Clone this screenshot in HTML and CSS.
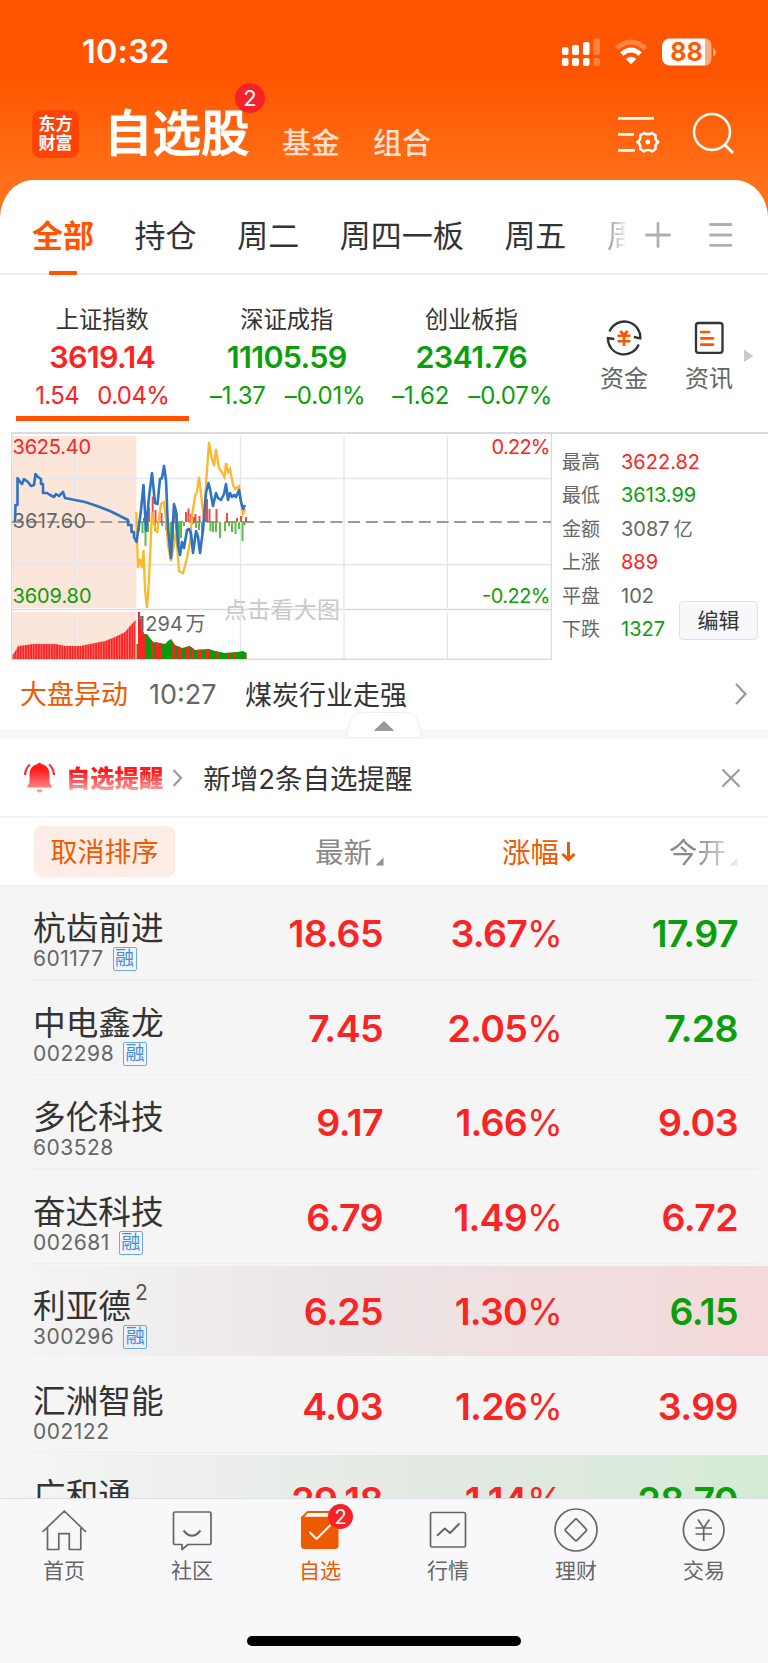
FILE: index.html
```html
<!DOCTYPE html>
<html lang="zh-CN">
<head>
<meta charset="utf-8">
<title>自选股</title>
<link rel="stylesheet" href="styles.css">
</head>
<body>
<div class="phone">
  <header class="top">
    <div class="status">
      <span class="clock">10:32</span>
      <svg class="status-icons" width="158" height="32" viewBox="560 35 158 32">
        <g fill="#fff">
          <rect x="562" y="46" width="6.500" height="8" rx="2"/><rect x="572" y="44" width="7" height="10" rx="2"/><rect x="583" y="41" width="6.500" height="13" rx="2"/>
          <rect x="562" y="57" width="6.500" height="8" rx="2"/><rect x="572" y="57" width="7" height="8" rx="2"/><rect x="583" y="57" width="6.500" height="8" rx="2"/>
          <g opacity=".25"><rect x="593.500" y="37.500" width="6.500" height="16.500" rx="2"/><rect x="593.500" y="57" width="6.500" height="8" rx="2"/></g>
        </g>
        <path d="M616.500 47.500Q631 34.500 645.500 47.500" fill="none" stroke="#fff" stroke-opacity=".27" stroke-width="5"/>
        <path d="M621.800 53Q631 44.800 640.200 53" fill="none" stroke="#fff" stroke-width="4.800"/>
        <path d="M625.800 58Q631 53.500 636.200 58L631 63.200Z" fill="#fff"/>
        <path d="M670 37.500H705.500V64.500H670A8 8 0 0 1 662 56.500V45.500A8 8 0 0 1 670 37.500Z" fill="#fff"/>
        <path d="M705.500 37.500A6 7 0 0 1 711.500 45V57A6 7 0 0 1 705.500 64.500Z" fill="#ffab80"/>
        <path d="M713 47Q716 48 716 51T713 55.500Z" fill="#ffab80"/>
        <text class="battery" x="686.500" y="60" text-anchor="middle" textLength="32.500">88</text>
      </svg>
    </div>
    <div class="title-row">
      <div class="logo"><span>东方</span><span>财富</span></div>
      <h1 class="title">自选股<b class="badge">2</b></h1>
      <span class="sub">基金</span>
      <span class="sub">组合</span>
      <svg class="title-icons" width="120" height="46" viewBox="616 110 120 46" fill="none" stroke="#fff">
        <path d="M618 118.300H654M618 134.300H634M618 150.300H635" stroke-width="2.800"/>
        <path d="M644 133C645.500 134.500 650.500 134.500 652 133L655.500 135.300C655 138.500 656 140.800 658.300 142C656 143.300 655 145.500 655.500 149L652 151.300C650 149.500 646 149.500 644 151.300L640.300 149C640.800 145.500 639.800 143.300 637.500 142C639.800 140.800 640.800 138.500 640.300 135.300Z" stroke-width="2.600" stroke-linejoin="round"/>
        <circle cx="647.800" cy="142" r="2.400" fill="#fff" stroke="none"/>
        <circle cx="712" cy="132" r="18" stroke-width="2.500"/><path d="M724.500 144.500L733 153" stroke-width="2.800"/>
      </svg>
    </div>
  </header>

  <main class="card">
    <nav class="groups">
      <span class="group on">全部</span>
      <span class="group">持仓</span>
      <span class="group">周二</span>
      <span class="group">周四一板</span>
      <span class="group">周五</span>
      <span class="group cut">周</span>
      <svg class="group-tools" width="92" height="28" viewBox="644 221 92 28" fill="none" stroke="#b0b0b0" stroke-width="2.800" stroke-linecap="round">
        <path d="M646.500 235H669.500M658 223.500V246.500M710.500 224.500H731M710.500 235H731M710.500 245.300H731"/>
      </svg>
    </nav>

    <section class="indices">
      <div class="index up on"><span class="index-name">上证指数</span><b>3619.14</b><p><span>1.54</span><span>0.04%</span></p></div>
      <div class="index down"><span class="index-name">深证成指</span><b>11105.59</b><p><span>–1.37</span><span>–0.01%</span></p></div>
      <div class="index down"><span class="index-name">创业板指</span><b>2341.76</b><p><span>–1.62</span><span>–0.07%</span></p></div>
      <div class="link">
        <svg width="36" height="36" viewBox="607 320 36 36" fill="none" stroke="#333" stroke-width="2.300">
          <path d="M610.500 331.500A16 16 0 0 1 641.300 338.300L634.800 337M639.700 344.500A16 16 0 0 1 608.900 338L615.300 339"/>
          <path d="M621.300 331L625 335L628.700 331M618.500 335.700H631.500M618.500 341.300H631.500M625 335V346" stroke="#ff5500" stroke-width="2.600"/>
        </svg>
        <span>资金</span>
      </div>
      <div class="link">
        <svg width="36" height="36" viewBox="692 320 36 36" fill="none" stroke="#333" stroke-width="2.300">
          <rect x="697" y="323" width="26.500" height="29.800" rx="2.500"/>
          <path d="M702.200 332H710M702.200 338.300H714M702.200 344.600H714" stroke="#ff5500" stroke-width="2.700" stroke-linecap="round"/>
        </svg>
        <span>资讯</span>
      </div>
      <svg class="more" width="10" height="14" viewBox="0 0 10 14"><path d="M0 .5L9.300 7L0 13Z" fill="#c8c8c8"/></svg>
    </section>

    <section class="market">
      <svg class="chart" width="541" height="228" viewBox="11 432 541 228">
        <defs>
          <pattern id="ticks" x="12" y="0" width="2.600" height="10" patternUnits="userSpaceOnUse"><rect width="2.600" height="10" fill="#f9a99f"/><rect width="2.050" height="10" fill="#fb2424"/></pattern>
          <clipPath id="volume"><path d="M136.500 659V644H138V612H140V619H142V628L144 634L147 634L150 638L153 642L160 643L165 644L168 641L171 639L175 645L182 648L190 646L195 650L209 649L215 651L225 653L237 652L243 651L246.500 653V659Z"/></clipPath>
        </defs>
        <path d="M12.500 436H136.500V608H12.500ZM12.500 612H136.500V659H12.500Z" fill="#fce6da"/>
        <path d="M74.500 436V608M74.500 612V659M240.500 436V608M240.500 612V659M344 436V608M344 612V659M447.500 436V608M447.500 612V659" stroke="#e3e6ee" stroke-width="1.300"/>
        <path d="M12 478.500H551M12 564.800H551" stroke="#e3e6ee" stroke-width="1.500"/>
        <path d="M12 609.500H551" stroke="#d9dbe3" stroke-width="1.600"/>
        <path d="M11.700 432V659.200H551.500V432" fill="none" stroke="#d9dbe3" stroke-width="1.400"/>
        <text class="wm" x="224" y="618" textLength="116">点击看大图</text>
        <path d="M11.800 522H551" stroke="#999" stroke-width="2" stroke-dasharray="12 5.700"/>
        <path d="M144 522V518M149 522V507M152.700 522V496.500M155.500 522V510M161.500 522V513M174 522V515M177 522V513M186 522V512M188.500 522V508.500M191 522V514M193.500 522V517M195.500 522V514M199.500 522V516M205 522V508M207 522V499M209.500 522V509M216.500 522V509M227 522V513M237 522V518M241 522V516M246 522V517" stroke="#ee4a4c" stroke-width="2"/>
        <path d="M139 522V531M142.500 522V533M145.500 522V546M148 522V532M155 522V531M158 522V528M162 522V526M166 522V530M168.500 522V538M171 522V545M173 522V552M176 522V536M179 522V546M181 522V538M184 522V526M193 522V524M196 522V528M199 522V530M202 522V533M210.500 522V531M213 522V532M216 522V532M220 522V538M225 522V531M229 522V526M232 522V532M235.500 522V534M239 522V529M242.500 522V541M244.500 522V525" stroke="#5bbd42" stroke-width="2"/>
        <path d="M136.300 512L138 568L140 559L142 568L143.500 550L145 590L147 608L149 580L152 512L154 524L157 533L161 504L164 502L166 520L168 545L171 561L174 545L176 530L179 571L183 573L187 558L190 542L192 516L195 496L197 492L199 477L202 503L204 519L206 485L209 442L211 455L214 466L216 449L219 468L223 474L224.500 477L226 463L228 472L230 469L233 485L235 489L239 486L241 500L243 514L245 509" fill="none" stroke="#ffb72b" stroke-width="2.300"/>
        <path d="M15 522L15.500 505H17.500V478L20 482L22 484L24 479L28 482L31 486L34 485L35.500 474L38 477L41 479V484H43V493L47 493L50 495L54 497L56 494L59 496L63 492L65 498L75 500L85 502L97 506L110 511L120 516L128 520V525H131.500V532H134V537L136.500 542L139 525L141 510L143.500 485L146 531L149 497L152 473L155 503L157.500 504L160 479L162 478L164 466L166 480L168 529L171 558L174 504L176 511L178 545L180 555L182 542L184 548L187 530L189 529L191 533L193 553L196 531L198 537L200 553L203 530L206 493L208.500 483L210 489L213 506L216 493L218 498L221 500L224 494L226 484L228 500L230 493L232 497L234 495L236 497L239 490L241 502L243 509L245 505" fill="none" stroke="#2f73c4" stroke-width="2.600" stroke-linejoin="round"/>
        <path d="M12.500 659V655L16 650L18 646L26 645L33 644H55L66 646H80L95 643L105 641L115 637L125 632L130 626L135.500 620V659Z" fill="url(#ticks)"/>
        <g clip-path="url(#volume)"><path d="M136 610H247V660H136Z" fill="#0a9a0a"/><path d="M138 610H145V660H138ZM151 610H154V660H151ZM155.500 610H161V660H155.500ZM172.500 610H175V660H172.500ZM178 610H181V660H178ZM186 610H190V660H186ZM192 610H194V660H192ZM197 610H202V660H197ZM205 610H209V660H205ZM216 610H218V660H216ZM227 610H229V660H227ZM234 610H236V660H234ZM245 610H247V660H245Z" fill="#fb2424"/></g>
        <g class="axis">
          <text x="12.500" y="453.800" fill="#fb2424" textLength="78.500">3625.40</text>
          <text x="12.500" y="528.400" fill="#666" textLength="73.500">3617.60</text>
          <text x="12.500" y="603" fill="#0a9f0a" textLength="79">3609.80</text>
          <text x="491.500" y="453.800" fill="#fb2424" textLength="59">0.22%</text>
          <text x="482" y="603" fill="#0a9f0a" textLength="68.500">-0.22%</text>
          <text x="137" y="631" fill="#666" textLength="46">1294</text><text x="185.500" y="631" fill="#666">万</text>
        </g>
      </svg>
      <div class="stats">
        <p><span>最高</span><b class="up">3622.82</b></p>
        <p><span>最低</span><b class="down">3613.99</b></p>
        <p><span>金额</span><b>3087<i>亿</i></b></p>
        <p><span>上涨</span><b class="up">889</b></p>
        <p><span>平盘</span><b>102</b></p>
        <p><span>下跌</span><b class="down">1327</b></p>
        <button class="edit">编辑</button>
      </div>
    </section>

    <section class="news">
      <span class="news-tag">大盘异动</span><span class="news-time">10:27</span><span class="news-text">煤炭行业走强</span>
      <svg class="go" width="14" height="24" viewBox="0 0 14 24"><path d="M2 2L11.500 12L2 22" fill="none" stroke="#999" stroke-width="2.200"/></svg>
    </section>
    <div class="band">
      <svg class="handle" width="76" height="27" viewBox="346 711 76 27"><path d="M347 737.500C349 724 350 712.500 363 712.500H405C418 712.500 419 724 421 737.500Z" fill="#fff" stroke="#eceef1"/><path d="M374.500 731V730L384 721L393.500 730V731Z" fill="#999"/></svg>
    </div>

    <section class="alert">
      <svg width="32" height="32" viewBox="24 762 32 32">
        <defs><linearGradient id="bell" x1="0" y1="762" x2="0" y2="793" gradientUnits="userSpaceOnUse"><stop offset=".25" stop-color="#ff1a1a"/><stop offset="1" stop-color="#ffa2a2"/></linearGradient></defs>
        <path d="M37.500 764Q39.500 761.500 41.500 764C47.500 765.500 49.500 770 49.500 775V782C49.500 784.500 52 785 52 787.500H27C27 785 29.500 784.500 29.500 782V775C29.500 770 31.500 765.500 37.500 764ZM36.500 789.500H42.500Q42 792.500 39.500 792.500T36.500 789.500Z" fill="url(#bell)"/>
        <path d="M30 764.500Q25.500 768 25 775M49 764.500Q53.500 768 54 775" fill="none" stroke="#ff2a2a" stroke-width="2.200"/>
      </svg>
      <strong>自选提醒</strong>
      <svg class="alert-go" width="11" height="18" viewBox="0 0 11 18"><path d="M1.500 1L9 9L1.500 17" fill="none" stroke="#999" stroke-width="2.200"/></svg>
      <span class="alert-text">新增2条自选提醒</span>
      <svg class="close" width="20" height="20" viewBox="0 0 20 20"><path d="M1.500 1.500L18.500 18.500M18.500 1.500L1.500 18.500" stroke="#999" stroke-width="2"/></svg>
    </section>

    <section class="heads">
      <div><span class="unsort">取消排序</span></div>
      <div class="head">最新<svg width="9" height="9" viewBox="0 0 9 9"><path d="M8.500 .5V8.500H.5Z" fill="#8f9096"/></svg></div>
      <div class="head sorted">涨幅<svg width="15" height="22" viewBox="0 0 15 22"><path d="M7.500 1V18M1.500 13L7.500 18.700L13.500 13" fill="none" stroke="#ee5a00" stroke-width="3"/></svg></div>
      <div class="head fade">今开<svg width="9" height="9" viewBox="0 0 9 9"><path d="M8.500 .5V8.500H.5Z" fill="#8f9096"/></svg></div>
    </section>

    <section class="list">
      <div class="row"><div class="stock"><h2>杭齿前进</h2><p>601177<em>融</em></p></div><b class="up">18.65</b><b class="up pct">3.67<i>%</i></b><b class="down">17.97</b></div>
      <div class="row"><div class="stock"><h2>中电鑫龙</h2><p>002298<em>融</em></p></div><b class="up">7.45</b><b class="up pct">2.05<i>%</i></b><b class="down">7.28</b></div>
      <div class="row"><div class="stock"><h2>多伦科技</h2><p>603528</p></div><b class="up">9.17</b><b class="up pct">1.66<i>%</i></b><b class="up">9.03</b></div>
      <div class="row"><div class="stock"><h2>奋达科技</h2><p>002681<em>融</em></p></div><b class="up">6.79</b><b class="up pct">1.49<i>%</i></b><b class="up">6.72</b></div>
      <div class="row rise"><div class="stock"><h2>利亚德<sup>2</sup></h2><p>300296<em>融</em></p></div><b class="up">6.25</b><b class="up pct">1.30<i>%</i></b><b class="down">6.15</b></div>
      <div class="row"><div class="stock"><h2>汇洲智能</h2><p>002122</p></div><b class="up">4.03</b><b class="up pct">1.26<i>%</i></b><b class="up">3.99</b></div>
      <div class="row fall"><div class="stock"><h2>广和通</h2></div><b class="up">29.18</b><b class="up pct">1.14<i>%</i></b><b class="down">28.70</b></div>
    </section>
  </main>

  <footer class="tabbar">
    <div class="tabs">
      <div class="tab"><svg width="46" height="46" viewBox="41 1507 46 46"><path d="M42.500 1532L64.300 1511L86 1532M47.500 1528V1549.500H58.800V1533.700H69.300V1549.500H80.800V1528"/></svg>首页</div>
      <div class="tab"><svg width="46" height="46" viewBox="169 1507 46 46"><path d="M175 1512H209.500Q211 1512 211 1513.500V1543Q211 1544.500 209.500 1544.500H188L182 1549.500V1544.500H175Q173.500 1544.500 173.500 1543V1513.500Q173.500 1512 175 1512Z"/><path d="M183.500 1530.500Q192 1541 200.500 1530.500" stroke-width="2"/></svg>社区</div>
      <div class="tab on"><svg width="46" height="46" viewBox="297 1507 46 46"><path d="M307.500 1511H331Q338.500 1512 338.500 1518V1545.500Q338.500 1549 335 1549H304.500Q301 1549 301 1545.500V1517Z" fill="#ee5a00" stroke="none"/><path d="M308 1513H331V1516.800H304.500Z" fill="#fff" stroke="none"/><path d="M309.500 1532L316.500 1539L330.500 1525" stroke="#fff" stroke-width="2"/></svg><b class="badge small">2</b>自选</div>
      <div class="tab"><svg width="46" height="46" viewBox="425 1507 46 46"><rect x="430.500" y="1512.500" width="35" height="34.500" rx="1.500"/><path d="M437 1535.700L444.800 1528.500L450 1533L459.500 1523.500" stroke-width="2"/></svg>行情</div>
      <div class="tab"><svg width="46" height="46" viewBox="553 1507 46 46"><circle cx="576" cy="1530" r="21"/><path d="M575.100 1519.400Q576 1518.500 576.900 1519.400L586.200 1529.100Q587 1530 586.200 1530.900L576.900 1540.300Q576 1541.200 575.100 1540.300L565.600 1530.900Q564.800 1530 565.600 1529.100Z"/></svg>理财</div>
      <div class="tab"><svg width="46" height="46" viewBox="681 1507 46 46"><circle cx="703.700" cy="1530" r="20.300"/><path d="M698 1519.500L703.700 1528L709.400 1519.500M695.500 1528H712M695.500 1534H712M703.700 1528V1541"/></svg>交易</div>
    </div>
    <div class="home"></div>
  </footer>
</div>
</body>
</html>
```
FILE: styles.css
```css
* { box-sizing: border-box; margin: 0; padding: 0; }
body { font-family: Inter, "Noto Sans CJK SC", sans-serif; color: #333; background: #fff; }
svg { display: block; flex: none; }
i, em { font-style: normal; }
.phone { width: 768px; height: 1663px; overflow: hidden; display: flex; flex-direction: column; background: linear-gradient(#ff5500 75px, #ff7019 180px); white-space: nowrap; }
.up { color: #fb2424; }
.down { color: #0a9f0a; }

.top { height: 180px; flex: none; color: #fff; }
.status { height: 103px; padding: 0 50px 0 82px; display: flex; justify-content: space-between; align-items: center; }
.clock { font-size: 32.5px; font-weight: 600; line-height: 40px; letter-spacing: .2px; }
.battery { font: 700 25px Inter, sans-serif; fill: #ff5a05; }
.title-row { display: flex; padding-left: 32px; height: 77px; }
.logo { width: 47px; height: 48px; margin-top: 7px; border-radius: 9px; background: #ff4307; display: flex; flex-direction: column; align-items: center; justify-content: center; }
.logo span { font-size: 17px; font-weight: 700; line-height: 19px; }
.title { position: relative; margin: 2px 0 0 25px; font-size: 48.5px; font-weight: 500; line-height: 58px; width: 147px; -webkit-text-stroke: 1.1px #fff; }
.badge { position: absolute; left: 131px; top: -22px; width: 30px; height: 30px; border-radius: 50%; background: #f6222a; color: #fff; font-size: 22px; font-weight: 400; line-height: 30px; text-align: center; -webkit-text-stroke: 0; }
.sub { font-size: 29px; font-weight: 500; line-height: 40px; margin: 21px 0 0 33px; color: #ffdfcd; }
.sub:nth-of-type(1) { margin-left: 31px; }
.title-icons { margin: 7px 32px 0 auto; }

.card { height: 1318px; flex: none; background: #fff; border-radius: 33px 33px 0 0 / 38px 38px 0 0; overflow: hidden; }
.groups { height: 95px; border-bottom: 2px solid #efeff1; display: flex; align-items: flex-start; padding: 36px 32px 0; }
.group { font-size: 31px; line-height: 40px; margin-right: 40.6px; position: relative; }
.group.on { color: #ff5500; font-weight: 700; }
.group.on::after { content: ""; position: absolute; left: 17px; top: 55px; width: 28px; height: 4px; border-radius: 1px; background: #ff5500; }
.group.cut { width: 18px; overflow: hidden; margin-right: 0; color: transparent; background: linear-gradient(90deg, #999, #eee); -webkit-background-clip: text; background-clip: text; }
.group-tools { margin: 5px 0 0 auto; }

.indices { height: 157px; padding-left: 10px; display: flex; }
.index { width: 184.5px; display: flex; flex-direction: column; align-items: center; padding-top: 30px; position: relative; }
.index-name { font-size: 23.3px; line-height: 30px; color: #333; }
.index b { font-size: 30.5px; font-weight: 600; line-height: 40px; margin-top: 2px; letter-spacing: -.7px; }
.index p { display: flex; gap: 19px; font-size: 24px; line-height: 30px; margin: 4px 0 0 2px; letter-spacing: -.1px; }
.index.up p { gap: 18px; letter-spacing: -.6px; margin-left: 0; }
.index.on::after { content: ""; position: absolute; left: 6px; top: 141px; width: 173px; height: 5px; background: #ff5500; }
.link { width: 85px; display: flex; flex-direction: column; align-items: center; padding-top: 45px; font-size: 24px; line-height: 30px; color: #666; gap: 8px; }
.link:nth-of-type(4) { margin-left: 18px; }
.more { margin: 74px 0 0 -8px; }

.market { display: flex; height: 228px; border-top: 2px solid #d9dbe3; margin-left: 11px; }
.chart { margin-top: -2px; }
.axis { font: 20px Inter, "Noto Sans CJK SC", sans-serif; }
.wm { font: 23px "Noto Sans CJK SC", sans-serif; fill: #c9c9c9; }
.stats { position: relative; flex: 1; padding: 12px 0 0 10px; }
.stats p { display: flex; line-height: 33.4px; font-size: 19px; color: #666; }
.stats span { width: 59px; }
.stats b { font-size: 20px; font-weight: 400; }
.stats i { font-size: 19px; margin-left: 4px; }
.edit { position: absolute; left: 127px; top: 167px; width: 79px; height: 39px; border: 1.5px solid #dfe1e8; border-radius: 4px; background: #f7f8fb; font: 21px/30px Inter, "Noto Sans CJK SC", sans-serif; color: #333; }

.news { height: 69px; display: flex; padding: 15px 20px 0; font-size: 27px; line-height: 40px; }
.news-tag { color: #ee5a00; width: 129px; }
.news-time { color: #666; width: 96px; }
.news-text { padding-top: 1px; }
.go { margin: 7px 0 0 auto; }
.band { height: 10px; background: #f5f7fa; position: relative; }
.handle { position: absolute; left: 346px; top: -18px; }
.alert { height: 79px; border-bottom: 2px solid #f2f2f4; display: flex; align-items: center; padding: 0 27px 0 24px; font-size: 27.5px; line-height: 40px; }
.alert strong { font-size: 24.3px; font-weight: 900; margin-left: 10px; background: linear-gradient(#ff1a1a 35%, #ff9a9a 80%); -webkit-background-clip: text; background-clip: text; color: transparent; }
.alert-go { margin: 0 20px 0 9px; }
.alert-text { padding-top: 2px; }
.close { margin-left: auto; }

.heads { height: 68px; padding: 0 30px 0 34px; display: grid; grid-template-columns: 149px 201px 192px 162px; align-items: center; border-bottom: 1px solid #eee; }
.unsort { display: block; width: 141px; height: 51px; border-radius: 8px; background: #fdede6; color: #ee5a00; font-size: 27px; line-height: 53px; text-align: center; }
.head { display: flex; justify-content: flex-end; align-items: center; font-size: 28.5px; line-height: 40px; color: #888; padding-top: 2px; }
.head svg { margin: 18px 0 0 3px; }
.sorted { color: #ee5a00; }
.sorted svg { margin: 0 0 2px 2px; }
.fade { -webkit-mask-image: linear-gradient(90deg, #000 72%, rgba(0, 0, 0, .15)); mask-image: linear-gradient(90deg, #000 72%, rgba(0, 0, 0, .15)); }

.list { background: #f5f5f5; height: 612px; overflow: hidden; }
.row { height: 94.5px; position: relative; display: grid; grid-template-columns: 150px 200px 177px 178px; padding: 0 30px 0 33px; background: linear-gradient(#eee, #eee) 32px 100% / 726px 1.5px no-repeat; }
.row > b { font-size: 37.5px; font-weight: 600; line-height: 50px; margin-top: 23px; text-align: right; letter-spacing: -.6px; }
.row > .pct { margin-right: -2px; letter-spacing: -.8px; }
.row > b i { font-weight: 400; font-size: 36.5px; }
.stock { padding-top: 22px; }
.stock h2 { font-size: 32.7px; font-weight: 400; line-height: 40px; position: relative; }
.stock sup { position: absolute; left: 102px; top: -13px; font-size: 21px; color: #555; }
.stock p { display: flex; align-items: center; font-size: 21px; line-height: 24px; color: #666; letter-spacing: .5px; margin-top: -1px; }
.stock em { margin-left: 9px; width: 24px; height: 24px; border: 1.5px solid #6aa9ec; border-radius: 2px; color: #3f8de6; font-size: 19px; line-height: 21px; text-align: center; letter-spacing: 0; }
.rise { background: linear-gradient(90deg, #f5f5f5, #ebe5e5 45%, #f5d8d9) 0 2px / 100% 90px no-repeat; }
.fall { background: linear-gradient(90deg, #f5f5f5, #e3e9e3 55%, #d5ead5) 0 2px / 100% 93px no-repeat; }

.tabbar { height: 165px; flex: none; background: #f8f8fb; border-top: 1.5px solid #dcdee4; }
.tabs { display: flex; height: 136px; padding-top: 8px; }
.tab { flex: 1; position: relative; display: flex; flex-direction: column; align-items: center; font-size: 21px; line-height: 30px; color: #666; gap: 3px; }
.tab svg { fill: none; stroke: #666; stroke-width: 1.7; stroke-linejoin: round; }
.tab.on { color: #ee5a00; }
.badge.small { left: 72px; top: -3px; width: 25px; height: 25px; line-height: 26px; font-size: 20px; }
.home { width: 274px; height: 10px; border-radius: 5px; background: #000; margin: 1px auto 0; }
```
